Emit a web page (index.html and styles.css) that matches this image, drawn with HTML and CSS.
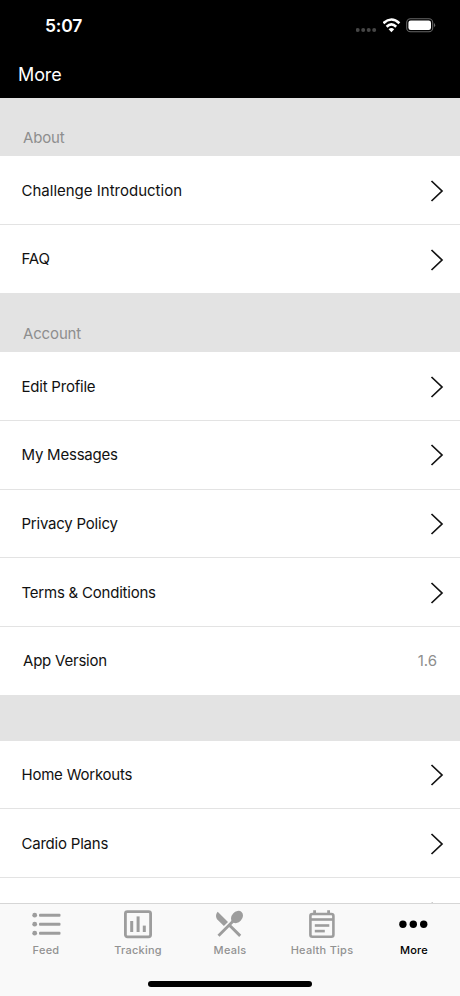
FILE: index.html
```html
<!DOCTYPE html>
<html lang="en">
<head>
  <meta charset="UTF-8">
  <meta name="viewport" content="width=device-width, initial-scale=1.0">
  <title>More</title>
  <link rel="stylesheet" href="styles.css">
</head>
<body>
  <svg class="defs" width="0" height="0">
    <symbol id="chevron" viewBox="0 0 14 24">
      <path d="M1.5 2 L12 12 L1.5 22" fill="none" stroke="#111" stroke-width="1.7"/>
    </symbol>
  </svg>

  <header class="header">
    <div class="status-bar">
      <span class="time">5:07</span>
      <div class="status-icons">
        <svg width="22" height="22" viewBox="0 0 22 22" fill="#464646">
          <circle cx="1.7" cy="15" r="2"/><circle cx="7.2" cy="15" r="2"/>
          <circle cx="12.7" cy="15" r="2"/><circle cx="18.2" cy="15" r="2"/>
        </svg>
        <svg width="18" height="22" viewBox="0 0 18 22" fill="none" stroke="#fff" stroke-width="2.6">
          <path d="M0.4 8.2 Q8.4 0.8 16.4 8.2"/>
          <path d="M3.6 11.7 Q8.4 7.2 13.2 11.7"/>
          <path d="M8.4 17.2 L5.6 14.2 Q8.4 11.8 11.2 14.2 Z" fill="#fff" stroke="none"/>
        </svg>
        <svg width="30" height="22" viewBox="0 0 30 22">
          <rect x="0.7" y="3.7" width="26" height="13" rx="3.8" fill="none" stroke="#666" stroke-width="1.1"/>
          <rect x="2.4" y="5.4" width="22.6" height="9.6" rx="2.3" fill="#fff"/>
          <path d="M28 8.1 Q30.4 10.2 28 12.3 Z" fill="#666"/>
        </svg>
      </div>
    </div>
    <h1>More</h1>
  </header>

  <main class="list">
    <h2 class="section-title">About</h2>
    <a class="row"><span class="intro">Challenge Introduction</span><svg class="chevron"><use href="#chevron"/></svg></a>
    <a class="row"><span>FAQ</span><svg class="chevron"><use href="#chevron"/></svg></a>

    <h2 class="section-title">Account</h2>
    <a class="row"><span>Edit Profile</span><svg class="chevron"><use href="#chevron"/></svg></a>
    <a class="row"><span>My Messages</span><svg class="chevron"><use href="#chevron"/></svg></a>
    <a class="row"><span>Privacy Policy</span><svg class="chevron"><use href="#chevron"/></svg></a>
    <a class="row"><span>Terms &amp; Conditions</span><svg class="chevron"><use href="#chevron"/></svg></a>
    <div class="row version"><span>App Version</span><span class="value">1.6</span></div>

    <div class="spacer"></div>
    <a class="row"><span>Home Workouts</span><svg class="chevron"><use href="#chevron"/></svg></a>
    <a class="row"><span>Cardio Plans</span><svg class="chevron"><use href="#chevron"/></svg></a>
    <a class="row"><span></span><svg class="chevron"><use href="#chevron"/></svg></a>
  </main>

  <footer class="footer">
    <nav class="tabs">
      <a class="tab">
        <svg width="30" height="30" viewBox="0 0 30 30" fill="#9d9d9d">
          <circle cx="3.7" cy="6.2" r="2.4"/><circle cx="3.7" cy="15.2" r="2.4"/><circle cx="3.7" cy="24.2" r="2.4"/>
          <rect x="8" y="4.7" width="21.5" height="3" rx="1"/>
          <rect x="8" y="13.7" width="21.5" height="3" rx="1"/>
          <rect x="8" y="22.7" width="21.5" height="3" rx="1"/>
        </svg>
        <span>Feed</span>
      </a>
      <a class="tab">
        <svg width="30" height="30" viewBox="0 0 30 30" fill="#9d9d9d">
          <rect x="2.4" y="2.6" width="25.2" height="25.2" rx="2" fill="none" stroke="#9d9d9d" stroke-width="2.8"/>
          <rect x="7.2" y="12" width="3" height="11"/>
          <rect x="13.6" y="7.4" width="3" height="15.6"/>
          <rect x="19.8" y="16.6" width="3" height="6.4"/>
        </svg>
        <span>Tracking</span>
      </a>
      <a class="tab">
        <svg width="30" height="30" viewBox="0 0 30 30" fill="#9d9d9d">
          <path d="M2.7 2.7 L13 13 L8.9 17.1 L2.8 11 C0.5 8.7 0.5 5 2.7 2.7 Z"/>
          <ellipse cx="22" cy="8" rx="5.2" ry="6.8" transform="rotate(42 22 8)"/>
          <path d="M18.5 11.8 L3.5 26.8 M14 15.7 L25.2 26.9" fill="none" stroke="#9d9d9d" stroke-width="2.9"/>
        </svg>
        <span>Meals</span>
      </a>
      <a class="tab">
        <svg width="30" height="30" viewBox="0 0 30 30" fill="#9d9d9d">
          <rect x="3.4" y="5" width="23" height="22.8" rx="2" fill="none" stroke="#9d9d9d" stroke-width="2.6"/>
          <path d="M7.6 1.2 V5 M21.6 1.2 V5" stroke="#9d9d9d" stroke-width="2.8"/>
          <rect x="4" y="9.2" width="22" height="2.6"/>
          <rect x="7.8" y="15.2" width="14.5" height="2.6"/>
          <rect x="7.8" y="20.8" width="10" height="2.6"/>
        </svg>
        <span>Health Tips</span>
      </a>
      <a class="tab active">
        <svg width="30" height="30" viewBox="0 0 30 30">
          <circle cx="3.9" cy="15.3" r="3.7"/><circle cx="14.3" cy="15.3" r="3.7"/><circle cx="24.7" cy="15.3" r="3.7"/>
        </svg>
        <span>More</span>
      </a>
    </nav>
    <div class="home-indicator"></div>
  </footer>
</body>
</html>
```
FILE: styles.css
```css
* {
  box-sizing: border-box;
}
body {
  margin: 0;
  height: 100vh;
  display: flex;
  flex-direction: column;
  overflow: hidden;
  background: #fff;
  color: #111;
  font-family: Inter, "Liberation Sans", sans-serif;
}
.defs {
  display: none;
}
h1, h2 {
  margin: 0;
  font-weight: 400;
}

/* Header */
.header {
  flex: none;
  height: 98px;
  background: #000;
  color: #fff;
}
.status-bar {
  display: flex;
  justify-content: space-between;
  align-items: center;
  height: 51px;
  padding: 0 24px 0 45px;
}
.time {
  font-size: 17.5px;
  font-weight: 600;
  letter-spacing: -0.2px;
}
.status-icons {
  display: flex;
  gap: 5px;
}
.header h1 {
  padding-left: 18px;
  font-size: 18px;
  line-height: 48px;
  letter-spacing: -0.1px;
}

/* List */
.list {
  flex: 1;
  min-height: 0;
  overflow: hidden;
}
.section-title {
  height: 58.4px;
  padding: 29px 23px 0;
  background: #e3e3e3;
  color: #8e8e8e;
  font-size: 15px;
  line-height: 22px;
  letter-spacing: -0.15px;
}
.row {
  display: flex;
  justify-content: space-between;
  align-items: center;
  height: 68.7px;
  padding: 0 16px 0 21.5px;
  border-bottom: 1px solid #e3e3e3;
  font-size: 15px;
  letter-spacing: -0.22px;
}
.intro {
  letter-spacing: 0;
}
.chevron {
  width: 14px;
  height: 24px;
  margin-top: 1.5px;
}
.version {
  padding: 0 23px;
}
.value {
  color: #8e8e8e;
  letter-spacing: 0;
}
.spacer {
  height: 45px;
  background: #e3e3e3;
}

/* Bottom tabs */
.footer {
  flex: none;
  height: 93px;
  background: #f9f9f9;
  border-top: 1px solid #d6d6d6;
}
.tabs {
  display: grid;
  grid-template-columns: repeat(5, 1fr);
  height: 77px;
  padding-top: 5px;
}
.tab {
  display: flex;
  flex-direction: column;
  align-items: center;
  gap: 4px;
  color: #929292;
  font-size: 11px;
  font-weight: 500;
  line-height: 14px;
  letter-spacing: 0.25px;
}
.tab.active {
  color: #000;
}
.home-indicator {
  width: 164px;
  height: 6px;
  margin: 0 auto;
  border-radius: 3px;
  background: #000;
}
```
